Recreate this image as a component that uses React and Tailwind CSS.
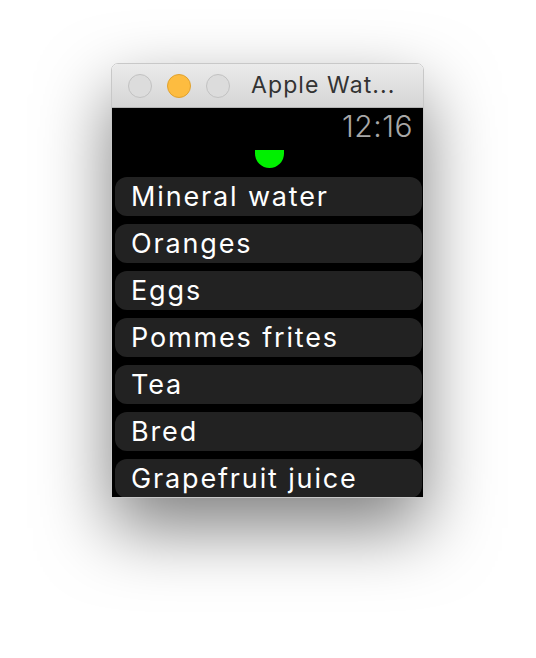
import React from "react";

const items = [
  "Mineral water",
  "Oranges",
  "Eggs",
  "Pommes frites",
  "Tea",
  "Bred",
  "Grapefruit juice",
];

const Light = ({ color, border }) => (
  <div className={`w-[24px] h-[24px] rounded-full border ${color} ${border}`} />
);

export default function App() {
  return (
    <div className="w-[536px] h-[658px] bg-white pt-[63px] pl-[111px] font-['Inter','Liberation_Sans',sans-serif]">
      <div className="w-[313px] h-[435px] rounded-t-[7px] overflow-hidden border border-[#c8c8c8] shadow-[0_30px_70px_rgba(0,0,0,0.5)] flex flex-col">
        {/* Title bar */}
        <div className="h-[44px] shrink-0 bg-gradient-to-b from-[#ebebeb] to-[#d5d5d5] border-b border-[#b4b4b4] flex items-center pl-[16px] gap-[15px]">
          <Light color="bg-[#dcdcdc]" border="border-[#c2c2c2]" />
          <Light color="bg-[#fdbc40]" border="border-[#e0a22f]" />
          <Light color="bg-[#dcdcdc]" border="border-[#c2c2c2]" />
          <span className="ml-[6px] text-[23px] text-[#333333] tracking-[1.1px]">Apple Wat...</span>
        </div>

        {/* Watch screen */}
        <div className="flex-1 bg-black overflow-hidden flex flex-col">
          <div className="h-[42px] shrink-0 flex justify-end items-start pr-[10px] pt-[1px]">
            <span className="text-[30px] font-light text-[#a8a8a8] leading-[34px] tracking-[0.5px]">12:16</span>
          </div>
          <div className="flex justify-center shrink-0 pl-[3px]">
            <div className="w-[29px] h-[18px] bg-[#00f000] rounded-b-full" />
          </div>
          <div className="flex flex-col gap-[8px] pl-[3px] pr-[1px] pt-[9px]">
            {items.map((t) => (
              <div
                key={t}
                className="h-[39px] shrink-0 rounded-[12px] bg-[#222222] flex items-center pl-[16px] text-[27px] text-white leading-none tracking-[1.85px]"
              >
                {t}
              </div>
            ))}
          </div>
        </div>
      </div>
    </div>
  );
}
